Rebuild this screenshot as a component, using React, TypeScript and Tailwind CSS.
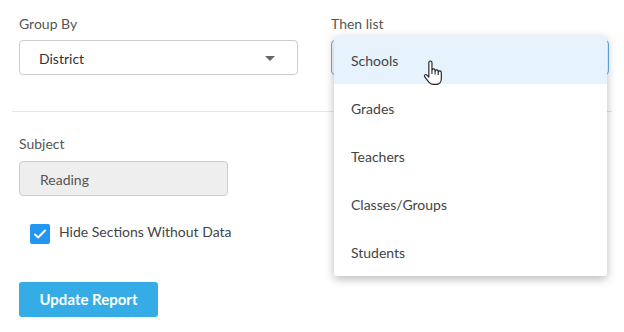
const items = ["Schools", "Grades", "Teachers", "Classes/Groups", "Students"];

function HandCursor() {
  return (
    <svg width="20" height="26" viewBox="0 0 19 25" className="absolute left-[423px] top-[60px]">
      <path
        d="M5.5 2.5a1.5 1.5 0 0 1 3 0V10a1.5 1.5 0 0 1 3 0v1a1.5 1.5 0 0 1 3 0v1a1.5 1.5 0 0 1 3 0V18c0 3-2 5.5-5 5.5H9.5c-2 0-3-1-4-2.2L1.6 16.2a1.3 1.3 0 0 1 2-1.7L5.5 16.5Z"
        fill="#fff"
        stroke="#222"
        strokeWidth="1.1"
        strokeLinejoin="round"
      />
      <path d="M8.5 10v3.5M11.5 11v3M14.5 12v2.5" stroke="#222" strokeWidth="1" />
    </svg>
  );
}

export default function App() {
  return (
    <div
      className="relative w-[624px] h-[332px] overflow-hidden bg-white text-[14px]"
      style={{ fontFamily: "Lato, 'Open Sans', sans-serif" }}
    >
      <div className="grid grid-cols-[279px_278px] gap-x-[33px] pl-[19px] pt-[14px]">
        <div>
          <div className="h-[20px] leading-[20px] text-[#555]">Group By</div>
          <div className="mt-[6px] h-[35px] flex items-center justify-between border border-[#ccc] rounded-[4px] pl-[19px] pr-[22px] pt-[2px] text-[#333]">
            <span>District</span>
            <span className="w-0 h-0 border-l-[5px] border-r-[5px] border-t-[5px] border-l-transparent border-r-transparent border-t-[#666]" />
          </div>
        </div>
        <div>
          <div className="h-[20px] leading-[20px] text-[#555]">Then list</div>
          <div className="mt-[6px] h-[35px] border border-[#66afe9] rounded-[4px]" />
        </div>
      </div>

      <div className="mx-[12px] mt-[36px] border-t border-[#e6e6e6]" />

      <div className="pl-[19px] pt-[22px]">
        <div className="h-[20px] leading-[20px] text-[#555]">Subject</div>
        <div className="mt-[7px] w-[209px] h-[35px] flex items-center bg-[#eeeeee] border border-[#ccc] rounded-[4px] pl-[20px] pt-[2px] text-[#555]">
          Reading
        </div>

        <label className="mt-[28px] ml-[11px] flex items-center gap-[9px] text-[#444]">
          <span className="w-[20px] h-[20px] rounded-[2px] bg-[#2196f3] flex items-center justify-center">
            <svg width="14" height="14" viewBox="0 0 14 14">
              <path d="M2 7.5l3.2 3L12 3.5" fill="none" stroke="#fff" strokeWidth="2" strokeLinecap="round" strokeLinejoin="round" />
            </svg>
          </span>
          <span className="leading-[16px] -mt-[4px]">Hide Sections Without Data</span>
        </label>

        <button className="mt-[38px] w-[139px] h-[35px] rounded-[3px] bg-[#36ace6] text-white font-bold text-[15px]">
          Update Report
        </button>
      </div>

      <div className="absolute left-[334px] top-[36px] w-[273px] rounded-[3px] bg-white shadow-[0_3px_10px_rgba(0,0,0,0.28)] overflow-hidden">
        {items.map((it, i) => (
          <div
            key={it}
            className={`h-[48px] flex items-center pl-[17px] text-[#444] ${i === 0 ? "bg-[#e6f3fc]" : ""}`}
          >
            {it}
          </div>
        ))}
      </div>
      <HandCursor />
    </div>
  );
}
